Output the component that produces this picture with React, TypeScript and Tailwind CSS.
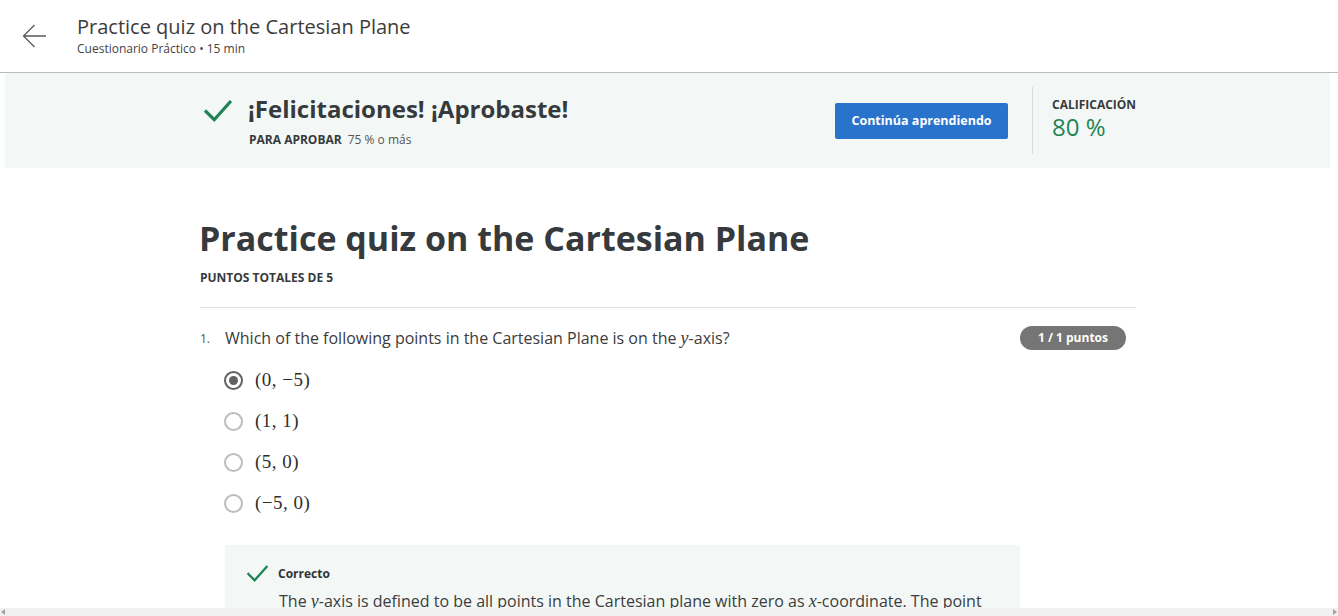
import React from 'react';

const options = ['(0, −5)', '(1, 1)', '(5, 0)', '(−5, 0)'];

const Check: React.FC<{ size: number; stroke?: number }> = ({ size, stroke = 2.6 }) => (
  <svg width={size} height={size} viewBox="0 0 24 24" fill="none">
    <path d="M2.5 12.5 L9 19 L21.5 5" stroke="#1f8354" strokeWidth={stroke} strokeLinecap="square" />
  </svg>
);

const Radio: React.FC<{ checked?: boolean }> = ({ checked }) =>
  checked ? (
    <span className="w-[19px] h-[19px] rounded-full border-2 border-[#616161] flex items-center justify-center shrink-0">
      <span className="w-[9px] h-[9px] rounded-full bg-[#616161]" />
    </span>
  ) : (
    <span className="w-[19px] h-[19px] rounded-full border-2 border-[#bdbdbd] shrink-0" />
  );

export default function App() {
  return (
    <div className="h-[616px] flex flex-col bg-white font-['Open_Sans',sans-serif] text-[#373a3c] overflow-hidden">
      <div className="flex-1 overflow-hidden">
        {/* Header */}
        <header className="h-[73px] border-b border-[#bcbcbc] flex items-start">
          <button className="w-[77px] h-[72px] flex items-center pl-[22px]">
            <svg width="25" height="26" viewBox="0 0 25 26" fill="none">
              <path d="M24 13 H1.5 M12.5 2 L1.5 13 L12.5 24" stroke="#5a5a5a" strokeWidth="1.3" />
            </svg>
          </button>
          <div className="pt-[13px]">
            <h1 className="text-[20px] leading-[28px] text-[#3c3c3c]">Practice quiz on the Cartesian Plane</h1>
            <p className="text-[12px] leading-[16px] text-[#444]">Cuestionario Práctico • 15 min</p>
          </div>
        </header>

        {/* Result banner */}
        <div className="mx-[5px] w-[1325px] h-[95px] bg-[#f3f8f7]">
          <div className="w-[936px] ml-[195px] h-full flex items-center">
            <div className="flex-1 flex items-start">
              <div className="w-[48px] pl-[3px] pt-[2px]">
                <Check size={30} />
              </div>
              <div>
                <h2 className="text-[24px] leading-[34px] font-bold text-[#373a3c] -mt-[2px]">¡Felicitaciones! ¡Aprobaste!</h2>
                <p className="text-[12px] leading-[16px] mt-[6px] pl-[1px]">
                  <span className="font-bold">PARA APROBAR</span>
                  <span className="ml-[6px] text-[#555]">75 % o más</span>
                </p>
              </div>
            </div>
            <button className="w-[173px] h-[36px] rounded-[2px] bg-[#2a73cc] text-white text-[12.5px] font-bold mt-[1px]">
              Continúa aprendiendo
            </button>
            <div className="ml-[24px] w-px h-[67px] bg-[#dadada]" />
            <div className="w-[103px] pl-[19px] pb-[4px]">
              <p className="text-[12px] leading-[16px] font-bold text-[#3a3a3a] whitespace-nowrap">CALIFICACIÓN</p>
              <p className="text-[24px] leading-[28px] text-[#1f8354]">80 %</p>
            </div>
          </div>
        </div>

        {/* Quiz */}
        <main className="w-[936px] ml-[200px] pt-[47px]">
          <h1 className="text-[34px] leading-[46px] font-bold text-[#373a3c] -ml-[1px]">Practice quiz on the Cartesian Plane</h1>
          <p className="mt-[9px] text-[12px] leading-[16px] font-bold">PUNTOS TOTALES DE 5</p>
          <div className="mt-[21px] border-t border-[#dedede]" />

          <div className="mt-[19px] flex items-start pr-[10px]">
            <span className="w-[25px] text-[12px] leading-[24px] text-[#555]">1.</span>
            <div className="flex-1">
              <p className="text-[16px] leading-[24px] text-[#3c3c3c] -mt-[1px]">
                Which of the following points in the Cartesian Plane is on the{' '}
                <i className="font-['Liberation_Serif',serif] text-[18px]">y</i>-axis?
              </p>
              <div className="mt-[10px] flex flex-col">
                {options.map((o, i) => (
                  <label key={o} className="h-[41px] flex items-center gap-[12px] -ml-[1px]">
                    <Radio checked={i === 0} />
                    <span className="font-['Liberation_Serif',serif] text-[19px] tracking-[0.5px] text-[#2f2f2f]">{o}</span>
                  </label>
                ))}
              </div>

              <div className="mt-[21px] bg-[#f3f8f7] pl-[21px] pt-[17px] pb-[20px]">
                <div className="flex items-center gap-[10px]">
                  <Check size={23} stroke={2.4} />
                  <span className="text-[12px] font-bold text-[#333] -ml-[1px]">Correcto</span>
                </div>
                <p className="pl-[33px] mt-[4px] text-[16px] leading-[24px] text-[#3c3c3c]">
                  The <i className="font-['Liberation_Serif',serif] text-[18px]">y</i>-axis is defined to be all points in the
                  Cartesian plane with zero as <i className="font-['Liberation_Serif',serif] text-[18px]">x</i>-coordinate. The
                  point
                </p>
              </div>
            </div>
            <span className="w-[106px] h-[24px] -mt-[1px] rounded-full bg-[#757575] text-white text-[12px] font-bold flex items-center justify-center">
              1 / 1 puntos
            </span>
          </div>
        </main>
      </div>

      {/* Horizontal scrollbar */}
      <div className="h-[8px] bg-[#f0f0f0] flex items-center justify-between px-[1px] shrink-0">
        <span className="w-0 h-0 border-t-[3px] border-b-[3px] border-r-[4px] border-t-transparent border-b-transparent border-r-[#a3a3a3]" />
        <span className="w-0 h-0 border-t-[3px] border-b-[3px] border-l-[4px] border-t-transparent border-b-transparent border-l-[#a3a3a3]" />
      </div>
    </div>
  );
}
